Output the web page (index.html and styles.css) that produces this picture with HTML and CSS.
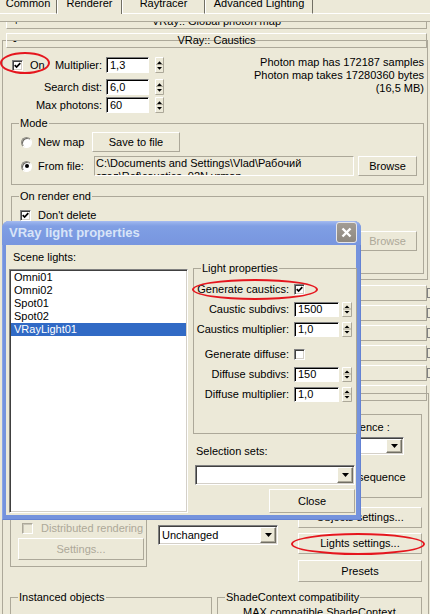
FILE: index.html
```html
<!DOCTYPE html>
<html>
<head>
<meta charset="utf-8">
<title>VRay Caustics</title>
<link rel="stylesheet" href="styles.css">
</head>
<body>
<div class="tabs">
  <div class="tab t1"><span>Common</span></div>
  <div class="tab t2"><span>Renderer</span></div>
  <div class="tab t3"><span>Raytracer</span></div>
  <div class="tab t4"><span>Advanced Lighting</span></div>
  <div class="tabfill"></div>
</div>

<div class="view">
  <div class="bar"><span class="sg">+</span><span class="bt">VRay:: Global photon map</span></div>
</div>

<div class="roll caus">
  <div class="bar"><span class="sg">-</span><span class="bt">VRay:: Caustics</span></div>
  <div class="ctop">
    <div class="crows">
      <div class="frow">
        <div class="lbl l1"><span class="chk"><svg width="7" height="7" viewBox="0 0 7 7"><path d="M.7 3.1L2.6 5.1L6.3 1.2" fill="none" stroke="#000" stroke-width="1.7"/></svg></span><span class="on">On</span><span class="ml">Multiplier:</span></div>
        <div class="inp">1,3</div>
        <svg class="spin" width="9" height="16" viewBox="0 0 9 16"><rect width="9" height="16" fill="#ECE9D8"/><path d="M.5 15.5V.5H8.5" fill="none" stroke="#fff"/><path d="M8.5 .5V15.5H.5" fill="none" stroke="#ACA899"/><path d="M1 7.5H8" stroke="#ACA899"/><path d="M2 7L4.5 4.3L7 7Z"/><path d="M2 10H7L4.5 12.7Z"/></svg>
      </div>
      <div class="frow fr2">
        <div class="lbl">Search dist:</div>
        <div class="inp">6,0</div>
        <svg class="spin" width="9" height="16" viewBox="0 0 9 16"><rect width="9" height="16" fill="#ECE9D8"/><path d="M.5 15.5V.5H8.5" fill="none" stroke="#fff"/><path d="M8.5 .5V15.5H.5" fill="none" stroke="#ACA899"/><path d="M1 7.5H8" stroke="#ACA899"/><path d="M2 7L4.5 4.3L7 7Z"/><path d="M2 10H7L4.5 12.7Z"/></svg>
      </div>
      <div class="frow fr3">
        <div class="lbl">Max photons:</div>
        <div class="inp">60</div>
        <svg class="spin" width="9" height="16" viewBox="0 0 9 16"><rect width="9" height="16" fill="#ECE9D8"/><path d="M.5 15.5V.5H8.5" fill="none" stroke="#fff"/><path d="M8.5 .5V15.5H.5" fill="none" stroke="#ACA899"/><path d="M1 7.5H8" stroke="#ACA899"/><path d="M2 7L4.5 4.3L7 7Z"/><path d="M2 10H7L4.5 12.7Z"/></svg>
      </div>
    </div>
    <div class="info">Photon map has 172187 samples<br>Photon map takes 17280360 bytes<br>(16,5 MB)</div>
  </div>

  <div class="grp mode">
    <div class="gt">Mode</div>
    <div class="mrow ma">
      <span class="rad"></span><span class="rl">New map</span>
      <div class="btn save">Save to file</div>
    </div>
    <div class="mrow mb">
      <span class="rad sel"></span><span class="rl">From file:</span>
      <div class="path">C:\Documents and Settings\Vlad\Рабочий<br>стол\Ref\caustics_02N.vrmap</div>
      <div class="btn browse">Browse</div>
    </div>
  </div>

  <div class="grp ore">
    <div class="gt">On render end</div>
    <div class="orow o1">
      <span class="chk"><svg width="7" height="7" viewBox="0 0 7 7"><path d="M.7 3.1L2.6 5.1L6.3 1.2" fill="none" stroke="#000" stroke-width="1.7"/></svg></span><span class="cl">Don't delete</span>
    </div>
    <div class="orow o2">
      <span class="chk"></span><span class="cl">Auto save:</span>
      <div class="path"></div>
      <div class="btn browse dis">Browse</div>
    </div>
    <div class="orow o3">
      <span class="chk"></span><span class="cl">Switch to saved map</span>
    </div>
  </div>
</div>

<div class="cr"><div class="bar"><span class="sg">+</span><span class="bt">VRay:: Environment</span></div><span class="brk"></span></div>
<div class="cr"><div class="bar"><span class="sg">+</span><span class="bt">VRay:: rQMC Sampler</span></div><span class="brk"></span></div>
<div class="cr"><div class="bar"><span class="sg">+</span><span class="bt">VRay:: Color mapping</span></div><span class="brk"></span></div>
<div class="cr"><div class="bar"><span class="sg">+</span><span class="bt">VRay:: Camera</span></div><span class="brk"></span></div>
<div class="cr"><div class="bar"><span class="sg">+</span><span class="bt">VRay:: Default displacement</span></div><span class="brk"></span></div>

<div class="roll sys">
  <div class="bar"><span class="sg">-</span><span class="bt">VRay:: System</span></div>
  <div class="sgrid">
    <div class="grp rc">
      <div class="gt">Raycaster params</div>
      <div class="rcrow">Max. tree depth: 60</div>
      <div class="rcrow">Min. leaf size: 0,0</div>
      <div class="rcrow">Face/level coef.: 1,0</div>
    </div>
    <div class="grp rr">
      <div class="gt">Render region division</div>
      <div class="rin">
        <div class="rleft">
          <div class="rcrow">X: 64</div>
          <div class="rcrow">Y: 64</div>
        </div>
        <div class="rright">
          <div class="rsl">Region sequence :</div>
          <div class="combo rcombo"><span class="ct">Spiral</span><span class="cb"><svg width="7" height="4" viewBox="0 0 7 4"><path d="M0 0H7L3.5 4Z"/></svg></span></div>
          <div class="rrev"><span class="chk"></span><span class="cl2">Reverse sequence</span></div>
        </div>
      </div>
    </div>

    <div class="grp dist">
      <div class="gt">Distributed rendering</div>
      <div class="drow"><span class="chk dis"></span><span class="dl">Distributed rendering</span></div>
      <div class="btn sett dis">Settings...</div>
    </div>
    <div class="prev">
      <div class="pl2">Previous:</div>
      <div class="combo ucombo"><span class="ct">Unchanged</span><span class="cb"><svg width="7" height="4" viewBox="0 0 7 4"><path d="M0 0H7L3.5 4Z"/></svg></span></div>
    </div>
    <div class="btns">
      <div class="btn b1">Objects settings...</div>
      <div class="btn b2">Lights settings...</div>
      <div class="btn b3">Presets</div>
    </div>
  </div>
  <div class="sbot">
    <div class="grp inst">
      <div class="gt">Instanced objects</div>
      <div class="irow"><span class="rad"></span><span class="il">Default</span><span class="rad r2"></span><span class="il">Always</span></div>
    </div>
    <div class="grp shade">
      <div class="gt">ShadeContext compatibility</div>
      <div class="stxt">MAX compatible ShadeContext</div>
    </div>
  </div>
</div>

<div class="dlg">
  <div class="dtitle">
    <span class="dtt">VRay light properties</span>
    <span class="dclose"><svg width="11" height="11" viewBox="0 0 11 11"><path d="M1.5 1.5L9.5 9.5M9.5 1.5L1.5 9.5" stroke="#fff" stroke-width="2.4"/></svg></span>
  </div>
  <div class="dbody">
    <div class="dleft">
      <div class="slabel">Scene lights:</div>
      <div class="list">
        <div class="li">Omni01</div>
        <div class="li">Omni02</div>
        <div class="li">Spot01</div>
        <div class="li">Spot02</div>
        <div class="li sel">VRayLight01</div>
      </div>
    </div>
    <div class="dright">
      <div class="grp lp">
        <div class="gt">Light properties</div>
        <div class="prow pc p1"><span class="pl">Generate caustics:</span><span class="chk"><svg width="7" height="7" viewBox="0 0 7 7"><path d="M.7 3.1L2.6 5.1L6.3 1.2" fill="none" stroke="#000" stroke-width="1.7"/></svg></span></div>
        <div class="prow pi p2"><span class="pl">Caustic subdivs:</span><div class="inp">1500</div><svg class="spin" width="10" height="15" viewBox="0 0 10 15"><rect width="10" height="15" fill="#ECE9D8"/><path d="M.5 14.5V.5H9.5" fill="none" stroke="#fff"/><path d="M9.5 .5V14.5H.5" fill="none" stroke="#ACA899"/><path d="M1 7H9" stroke="#ACA899"/><path d="M2.5 6L5 3.5L7.5 6Z"/><path d="M2.5 9H7.5L5 11.5Z"/></svg></div>
        <div class="prow pi p3"><span class="pl">Caustics multiplier:</span><div class="inp">1,0</div><svg class="spin" width="10" height="15" viewBox="0 0 10 15"><rect width="10" height="15" fill="#ECE9D8"/><path d="M.5 14.5V.5H9.5" fill="none" stroke="#fff"/><path d="M9.5 .5V14.5H.5" fill="none" stroke="#ACA899"/><path d="M1 7H9" stroke="#ACA899"/><path d="M2.5 6L5 3.5L7.5 6Z"/><path d="M2.5 9H7.5L5 11.5Z"/></svg></div>
        <div class="prow pc p4"><span class="pl">Generate diffuse:</span><span class="chk"></span></div>
        <div class="prow pi p5"><span class="pl">Diffuse subdivs:</span><div class="inp">150</div><svg class="spin" width="10" height="15" viewBox="0 0 10 15"><rect width="10" height="15" fill="#ECE9D8"/><path d="M.5 14.5V.5H9.5" fill="none" stroke="#fff"/><path d="M9.5 .5V14.5H.5" fill="none" stroke="#ACA899"/><path d="M1 7H9" stroke="#ACA899"/><path d="M2.5 6L5 3.5L7.5 6Z"/><path d="M2.5 9H7.5L5 11.5Z"/></svg></div>
        <div class="prow pi p6"><span class="pl">Diffuse multiplier:</span><div class="inp">1,0</div><svg class="spin" width="10" height="15" viewBox="0 0 10 15"><rect width="10" height="15" fill="#ECE9D8"/><path d="M.5 14.5V.5H9.5" fill="none" stroke="#fff"/><path d="M9.5 .5V14.5H.5" fill="none" stroke="#ACA899"/><path d="M1 7H9" stroke="#ACA899"/><path d="M2.5 6L5 3.5L7.5 6Z"/><path d="M2.5 9H7.5L5 11.5Z"/></svg></div>
      </div>
      <div class="ssl">Selection sets:</div>
      <div class="combo cs"><span class="ct"></span><span class="cb"><svg width="7" height="4" viewBox="0 0 7 4"><path d="M0 0H7L3.5 4Z"/></svg></span></div>
      <div class="btn close">Close</div>
    </div>
  </div>
</div>

<div class="ell e1"></div>
<div class="ell e2"></div>
<div class="ell e3"></div>
</body>
</html>
```

FILE: styles.css
```css
* { box-sizing: border-box; }
html, body { margin: 0; padding: 0; }
body {
  width: 430px;
  height: 614px;
  overflow: hidden;
  position: relative;
  background: #ECE9D8;
  font: 11px/13px "Liberation Sans", Arial, sans-serif;
  color: #000;
}

/* tabs */
.tabs { display: flex; height: 14px; }
.tab {
  height: 14px; overflow: hidden; flex: none; text-align: center;
  border-left: 1px solid #fff; border-right: 1px solid #716F64; border-bottom: 1px solid #fff;
}
.tab span { display: block; margin-top: -3px; white-space: nowrap; }
.t1 { width: 57px; border-left: none; }
.t2 { width: 65px; border-bottom: none; }
.t3 { width: 83px; }
.t4 { width: 108px; }
.tabfill { flex: 1; border-bottom: 1px solid #fff; }

/* rollout bars */
.view { margin-top: 7px; height: 8px; border-top: 1px solid #ACA899; overflow: hidden; }
.bar {
  height: 15px; display: flex; align-items: center; white-space: nowrap;
  border: 1px solid; border-color: #fff #ACA899 #ACA899 #fff;
}
.view .bar { margin: -8px 3px 0 6px; }
.sg { width: 8px; margin-left: 6px; flex: none; }
.bt { flex: 1; text-align: center; margin-right: 14px; }

.roll { border: 1px solid #ACA899; }
.roll > .bar { margin: -8px 0 0 3px; }
.caus { margin: 11px 2px 0 2px; padding-bottom: 5px; }

/* widgets */
.chk {
  display: inline-flex; align-items: center; justify-content: center; flex: none;
  width: 11px; height: 11px; background: #fff;
  border: 1px solid; border-color: #808080 #fff #fff #808080;
  box-shadow: inset 1px 1px #404040, inset -1px -1px #D4D0C8;
}
.chk.dis { background: #ECE9D8; border-color: #ACA899 #fff #fff #ACA899; box-shadow: inset 1px 1px #C8C5B8; }
.rad {
  display: inline-flex; align-items: center; justify-content: center; flex: none;
  width: 11px; height: 11px; border-radius: 50%; background: #fff;
  border: 1px solid; border-color: #8E8C82 #fff #fff #8E8C82;
  box-shadow: inset 1px 1px #6F6D66;
}
.rad.sel::after { content: ""; width: 4px; height: 4px; border-radius: 50%; background: #000; }
.inp {
  background: #fff; white-space: nowrap; overflow: hidden; padding-left: 3px; flex: none;
  border: 1px solid; border-color: #7F7F7F #fff #fff #7F7F7F;
  box-shadow: inset 1px 1px #000;
}
.spin { display: block; flex: none; }
.btn {
  display: flex; align-items: center; justify-content: center; flex: none; white-space: nowrap;
  background: #ECE9D8; border: 1px solid; border-color: #fff #ACA899 #ACA899 #fff;
}
.dis { color: #ACA899; }
.combo {
  display: flex; flex: none; background: #fff; padding: 1px;
  border: 1px solid; border-color: #808080 #fff #fff #808080;
  box-shadow: inset 1px 1px #404040, inset -1px -1px #D4D0C8;
}
.combo .ct { flex: 1; padding-left: 2px; align-self: center; white-space: nowrap; overflow: hidden; }
.combo .cb {
  width: 16px; flex: none; display: flex; align-items: center; justify-content: center;
  background: #ECE9D8; border: 1px solid; border-color: #fff #716F64 #716F64 #fff;
  box-shadow: inset -1px -1px #ACA899;
}
.grp { border: 1px solid #ACA899; }
.gt {
  margin: -7px 0 0 7px; padding: 0 1px; width: max-content;
  background: #ECE9D8; line-height: 12px; white-space: nowrap;
}

/* caustics top rows */
.ctop { display: flex; margin-top: 9px; }
.crows { width: 161px; flex: none; }
.frow { display: flex; align-items: center; height: 16px; }
.fr2 { margin-top: 6px; }
.fr3 { margin-top: 2px; }
.lbl { width: 99px; flex: none; text-align: right; white-space: nowrap; }
.l1 { display: flex; align-items: center; }
.l1 .chk { margin-left: 9px; }
.l1 .on { margin-left: 7px; }
.l1 .ml { margin-left: auto; }
.frow .inp { width: 43px; height: 16px; margin-left: 4px; line-height: 14px; }
.frow .spin { margin-left: 6px; }
.info { flex: 1; text-align: right; padding-right: 3px; margin-top: -1px; white-space: nowrap; }

/* mode group */
.mode { margin: 10px 3px 0 8px; padding-bottom: 8px; }
.mrow { display: flex; align-items: center; height: 20px; }
.ma { margin-top: 3px; }
.mb { margin-top: 4px; }
.mrow .rad { margin-left: 9px; }
.rl { width: 54px; margin-left: 6px; flex: none; white-space: nowrap; }
.save { width: 88px; height: 20px; }
.path {
  width: 260px; height: 20px; margin-left: 2px; padding: 0 1px; overflow: hidden; flex: none;
  white-space: nowrap; border: 1px solid; border-color: #ACA899 #fff #fff #ACA899;
}
.browse { width: 59px; height: 20px; margin-left: 4px; }

/* on render end */
.ore { margin: 11px 3px 0 8px; padding-bottom: 5px; }
.orow { display: flex; align-items: center; }
.o1 { margin-top: 7px; height: 13px; }
.o2 { margin-top: 9px; height: 20px; }
.o3 { margin-top: 4px; height: 13px; }
.orow .chk { margin-left: 8px; }
.cl { margin-left: 7px; white-space: nowrap; }
.o2 .cl { width: 54px; flex: none; }

/* collapsed rollouts */
.cr { display: flex; align-items: center; margin: 4px 0 0 6px; }
.caus + .cr { margin-top: 5px; }
.cr .bar { flex: 1; height: 16px; }
.brk { width: 3px; height: 10px; flex: none; border: 1px solid #808080; border-right: none; }

/* system rollout */
.sys { margin: 12px 1px 0 2px; height: 240px; }
.sys > .bar { margin: -9px 1px 0 3px; height: 16px; }
.sgrid {
  display: grid; grid-template-columns: 137px 135px 124px;
  column-gap: 8px; row-gap: 9px; margin: 13px 0 0 7px;
}
.rc { grid-column: 1; }
.rcrow { height: 16px; margin-top: 4px; padding-left: 6px; white-space: nowrap; line-height: 16px; }
.rr { grid-column: 2 / 4; padding-bottom: 13px; }
.rin { display: flex; }
.rleft { width: 136px; flex: none; }
.rright { margin-left: 6px; width: 106px; flex: none; }
.rsl { margin-top: 1px; white-space: nowrap; }
.rcombo { margin-top: 3px; height: 18px; }
.rrev { margin-top: 16px; height: 13px; display: flex; align-items: center; }
.cl2 { margin-left: 5px; white-space: nowrap; }

.dist { grid-column: 1; align-self: start; padding-bottom: 6px; }
.drow { display: flex; align-items: center; height: 13px; margin-top: 9px; }
.drow .chk { margin-left: 11px; }
.dl { margin-left: 8px; white-space: nowrap; color: #ACA899; }
.sett { margin: 3px 2px 0 7px; height: 22px; }
.prev { grid-column: 2; }
.pl2 { margin-top: 3px; padding-left: 3px; }
.ucombo { margin: 2px 0 0 3px; width: 120px; height: 20px; }
.btns { grid-column: 3; }
.b1 { height: 21px; }
.b2 { height: 21px; margin-top: 5px; }
.b3 { height: 22px; margin-top: 6px; }

.sbot { display: flex; gap: 5px; margin: 15px 0 0 7px; }
.inst { width: 202px; height: 40px; }
.shade { width: 205px; height: 40px; }
.irow { display: flex; align-items: center; margin-top: 11px; height: 13px; }
.irow .rad { margin-left: 11px; }
.irow .r2 { margin-left: 40px; }
.il { margin-left: 6px; }
.stxt { margin: 3px 0 0 25px; white-space: nowrap; }

/* dialog */
.dlg {
  position: absolute; left: 2px; top: 221px; width: 359px; height: 299px;
  display: flex; flex-direction: column;
  background: #7593DD; padding: 0 4px 4px 3px;
  border-radius: 7px 7px 0 0;
  border-left: 1px solid #8AA5E6; border-right: 1px solid #6482D3; border-bottom: 1px solid #6482D3;
}
.dtitle {
  height: 24px; flex: none; display: flex; align-items: flex-start;
  margin: 0 -5px 0 -4px; padding: 0 4px 0 7px;
  border-radius: 7px 7px 0 0;
  background: linear-gradient(#A7BCF0 0, #93AEEB 2px, #819FE4 5px, #7C9BE2 50%, #7896DF 100%);
}
.dtt {
  flex: 1; font-weight: bold; font-size: 13px; line-height: 16px; margin-top: 4px;
  color: #D8E4F8; white-space: nowrap;
}
.dclose {
  width: 21px; height: 21px; margin-top: 1px; flex: none; border-radius: 3px;
  display: flex; align-items: center; justify-content: center;
  background: linear-gradient(#A39D95, #8E8880);
  border: 1px solid #E6E6EA;
}
.dbody { flex: 1; display: flex; background: #ECE9D8; }
.dleft { width: 179px; margin-left: 3px; padding-top: 6px; flex: none; }
.slabel { margin-left: 4px; }
.list {
  margin-top: 5px; height: 244px; background: #fff; padding: 1px;
  border: 1px solid; border-color: #808080 #fff #fff #808080;
  box-shadow: inset 1px 1px #404040, inset -1px -1px #D4D0C8;
}
.li { height: 13px; padding-left: 3px; white-space: nowrap; }
.li.sel { background: #316AC5; color: #fff; }
.dright { width: 164px; margin-left: 5px; padding-top: 23px; flex: none; }
.lp { padding-bottom: 31px; }
.prow { display: flex; align-items: center; }
.pc { height: 13px; }
.pi { height: 15px; }
.pl { width: 95px; flex: none; text-align: right; white-space: nowrap; }
.prow .chk { margin-left: 5px; }
.prow .inp { margin-left: 5px; width: 45px; height: 15px; line-height: 13px; }
.prow .spin { margin-left: 3px; }
.p1 { margin-top: 9px; }
.p2 { margin-top: 6px; }
.p3 { margin-top: 5px; }
.p4 { margin-top: 11px; }
.p5 { margin-top: 6px; }
.p6 { margin-top: 5px; }
.ssl { margin: 11px 0 0 3px; }
.cs { margin: 7px 0 0 2px; width: 160px; height: 20px; }
.close { margin: 4px 0 0 76px; width: 86px; height: 24px; }

/* red annotation ellipses */
.ell { position: absolute; border: 2px solid #E5161E; border-radius: 50%; }
.e1 { left: 0; top: 52px; width: 50px; height: 22px; }
.e2 { left: 192px; top: 279px; width: 126px; height: 21px; }
.e3 { left: 291px; top: 533px; width: 134px; height: 22px; }
```
